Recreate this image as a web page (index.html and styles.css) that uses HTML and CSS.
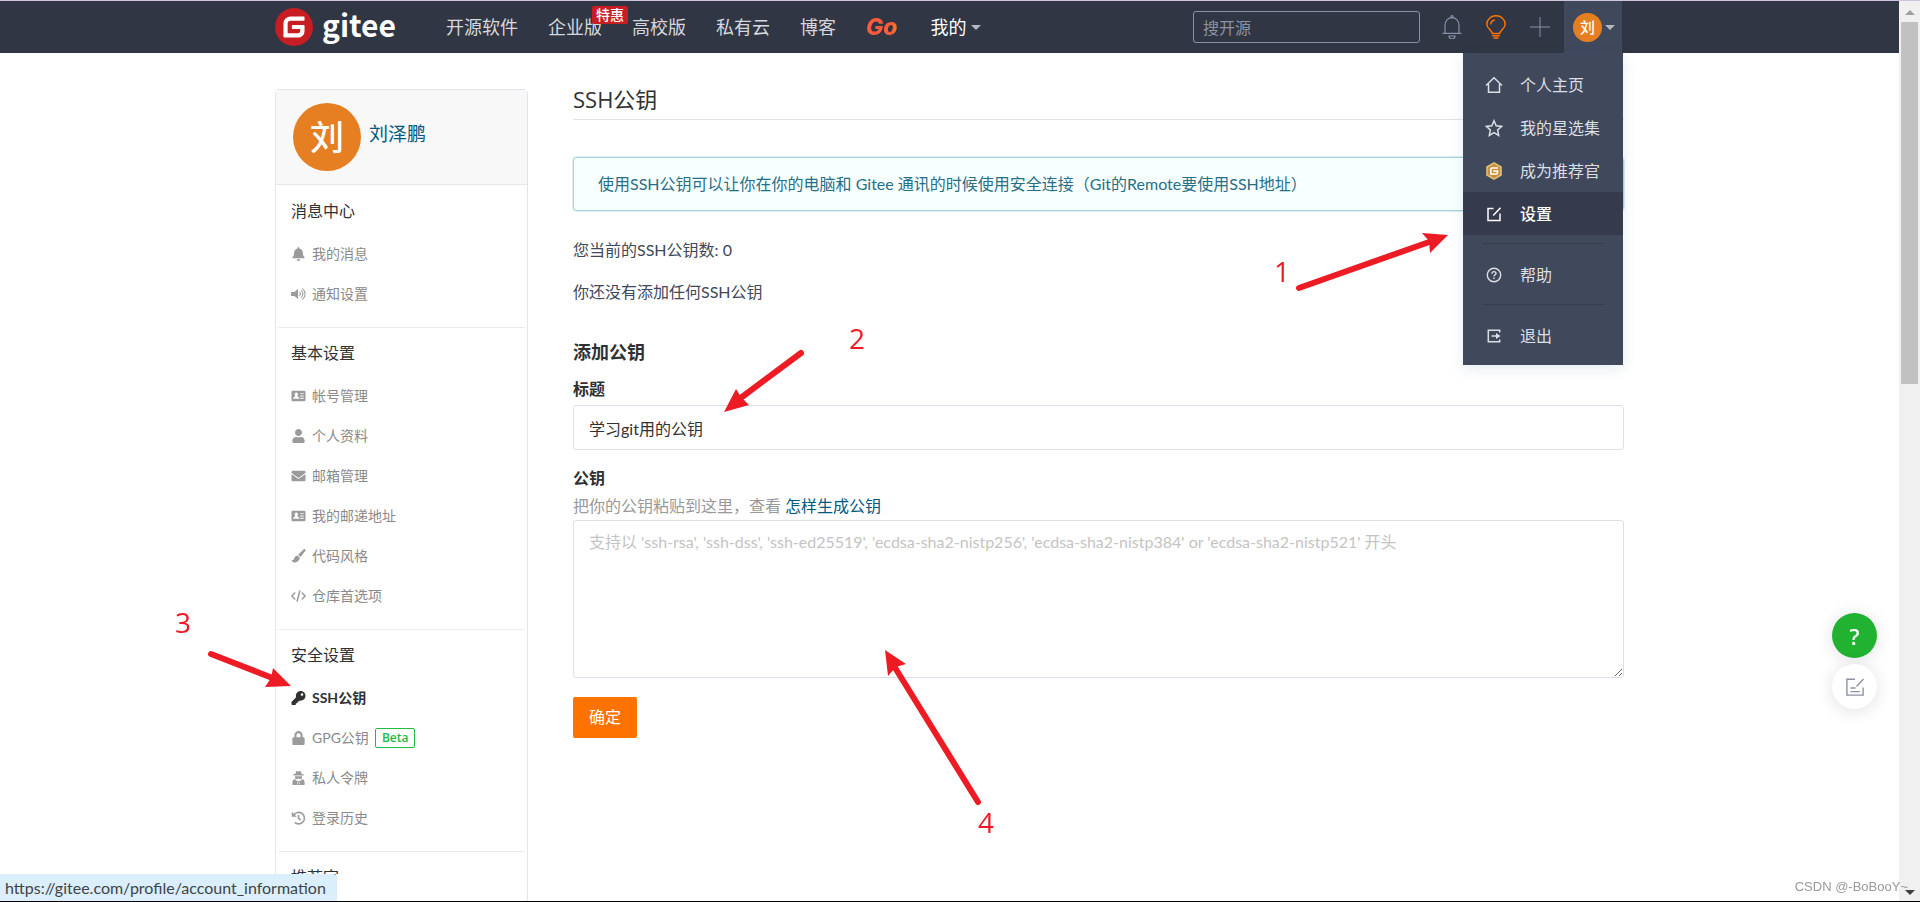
FILE: index.html
```html
<!DOCTYPE html>
<html lang="zh-CN">
<head>
<meta charset="utf-8">
<title>SSH公钥 - Gitee</title>
<link rel="stylesheet" href="styles.css">
</head>
<body>
<svg class="sprite" aria-hidden="true">
  <symbol id="gitee" viewBox="0 0 32 32"><circle cx="16" cy="16" r="16" fill="#c71d23"/><path fill="#fff" d="M24.1 14.222h-9.087a.79.79 0 0 0-.79.79v1.975c0 .437.353.79.79.79h5.531c.436 0 .79.354.79.79v.395a2.37 2.37 0 0 1-2.37 2.371h-7.507a.79.79 0 0 1-.79-.79v-7.506a2.37 2.37 0 0 1 2.37-2.37h11.06a.79.79 0 0 0 .79-.791V7.9a.79.79 0 0 0-.79-.79h-11.060a5.926 5.926 0 0 0-5.926 5.926v11.06c0 .437.354.79.79.79h11.653a5.333 5.333 0 0 0 5.333-5.333v-4.54a.79.79 0 0 0-.79-.79z"/></symbol>
  <symbol id="bell" viewBox="0 0 448 512"><path d="M224 512c35.32 0 63.97-28.65 63.97-64H160.03c0 35.35 28.65 64 63.97 64zm215.39-149.71c-19.32-20.76-55.47-51.99-55.47-154.29 0-77.7-54.48-139.9-127.94-155.16V32c0-17.67-14.32-32-31.98-32s-31.98 14.33-31.98 32v20.84C118.56 68.1 64.08 130.3 64.08 208c0 102.3-36.15 133.53-55.47 154.29-6 6.45-8.66 14.16-8.61 21.71.11 16.4 12.98 32 32.1 32h383.8c19.12 0 32-15.6 32.1-32 .05-7.55-2.61-15.27-8.61-21.71z"/></symbol>
  <symbol id="volume" viewBox="0 0 18 16"><path d="M1 5.500h3L8.500 2v12L4 10.500H1a1 1 0 0 1-1-1v-3a1 1 0 0 1 1-1z"/><path fill="none" stroke="currentColor" stroke-width="1.300" stroke-linecap="round" d="M10.500 6.300a2.200 2.200 0 0 1 0 3.400M12.300 4a5 5 0 0 1 0 8M14 1.800a8 8 0 0 1 0 12.400"/></symbol>
  <symbol id="card" viewBox="0 0 16 16"><path fill-rule="evenodd" d="M1.500 2h13A1.500 1.500 0 0 1 16 3.500v9a1.500 1.500 0 0 1-1.500 1.500h-13A1.500 1.500 0 0 1 0 12.500v-9A1.500 1.500 0 0 1 1.500 2zM5.500 4a2 2 0 0 0-1.500 3.300V8.500L2 10v1h7v-1L7 8.500V7.300A2 2 0 0 0 5.500 4zM10 4.500v1h4v-1zm0 3v1h4v-1zm0 2.500v1h4v-1z"/></symbol>
  <symbol id="user" viewBox="0 0 448 512"><path d="M224 256c70.7 0 128-57.3 128-128S294.7 0 224 0 96 57.3 96 128s57.3 128 128 128zm89.600 32h-16.700c-22.200 10.200-46.900 16-72.900 16s-50.600-5.800-72.900-16h-16.700C60.200 288 0 348.200 0 422.400V464c0 26.500 21.500 48 48 48h352c26.500 0 48-21.500 48-48v-41.600c0-74.200-60.200-134.400-134.400-134.400z"/></symbol>
  <symbol id="mail" viewBox="0 0 512 512"><path d="M502.300 190.800c3.900-3.100 9.700-.2 9.700 4.700V400c0 26.500-21.500 48-48 48H48c-26.500 0-48-21.500-48-48V195.600c0-5 5.700-7.800 9.700-4.700 22.400 17.400 52.100 39.500 154.100 113.600 21.100 15.400 56.700 47.800 92.200 47.600 35.700.3 72-32.800 92.300-47.600 102-74.100 131.600-96.300 154-113.700zM256 320c23.200.4 56.600-29.200 73.400-41.400 132.700-96.300 142.800-104.700 173.400-128.700 5.800-4.500 9.200-11.500 9.200-18.900v-19c0-26.500-21.500-48-48-48H48c-26.500 0-48 21.500-48 48v19c0 7.400 3.400 14.300 9.200 18.900 30.600 23.900 40.700 32.400 173.400 128.700 16.800 12.200 50.200 41.800 73.400 41.400z"/></symbol>
  <symbol id="brush" viewBox="0 0 16 16"><path d="M15.600.4c.5.500.6 1.200.1 1.900L10.300 9.200 7.600 6.600 13.700.5c.6-.6 1.400-.6 1.900-.1zM6.800 7.400l2.700 2.600c0 1-.3 1.700-.7 2.300-1 1.500-2.600 2.900-5 3.200C2 15.700.8 14.500 0 12.200c1.500.8 2.600.2 3-1.400.5-1.900 2-3.200 3.800-3.400z"/></symbol>
  <symbol id="code" viewBox="0 0 20 16"><path fill="none" stroke="currentColor" stroke-width="2" stroke-linecap="round" stroke-linejoin="round" d="M5 4 1.200 8 5 12M15 4l3.800 4-3.800 4M11.800 1.300 8.200 14.700"/></symbol>
  <symbol id="key" viewBox="0 0 512 512"><path d="M512 176.001C512 273.203 433.202 352 336 352c-11.220 0-22.190-1.062-32.827-3.069l-24.012 27.014A23.999 23.999 0 0 1 261.223 384H224v40c0 13.255-10.745 24-24 24h-40v40c0 13.255-10.745 24-24 24H24c-13.255 0-24-10.745-24-24v-78.059c0-6.365 2.529-12.470 7.029-16.971l161.802-161.802C163.108 213.814 160 195.271 160 176 160 78.798 238.797.001 335.999 0 433.488-.001 512 78.511 512 176.001zM336 128c0 26.510 21.490 48 48 48s48-21.490 48-48-21.490-48-48-48-48 21.490-48 48z"/></symbol>
  <symbol id="lock" viewBox="0 0 448 512"><path d="M400 224h-24v-72C376 68.200 307.800 0 224 0S72 68.200 72 152v72H48c-26.500 0-48 21.500-48 48v192c0 26.500 21.500 48 48 48h352c26.500 0 48-21.500 48-48V272c0-26.500-21.500-48-48-48zm-104 0H152v-72c0-39.700 32.300-72 72-72s72 32.300 72 72v72z"/></symbol>
  <symbol id="spy" viewBox="0 0 16 16"><path fill-rule="evenodd" d="M5.500 0 8 .7 10.500 0l1 3L14 4v1H2V4l2.500-1zM4 6h8v1.500L11.500 9H9L8 8 7 9H4.500L4 7.500zM3 9.500l2 .5 3 5.500L11 10l2-.5c1 .8 2 2 2 3.500v2c0 .6-.4 1-1 1H2c-.6 0-1-.4-1-1v-2c0-1.500 1-2.700 2-3.500zM5.800 11l1 4h2.400l1-4H9l-.4 1H7.400L7 11z"/></symbol>
  <symbol id="history" viewBox="0 0 16 16"><path fill="none" stroke="currentColor" stroke-width="1.800" d="M2.600 4.600A6.600 6.600 0 1 1 3.700 13M8 4.500V8.500L10.600 10.300"/><path d="M.3.800v5.700H6z"/></symbol>
  <symbol id="o-bell" viewBox="0 0 20 24"><g fill="none" stroke="currentColor" stroke-width="1.200"><path d="M.500 18.400h19M3 18.400V10.500C3 6 6 2.700 10 2.700s7 3.300 7 7.800v7.900"/><circle cx="10" cy="1.700" r="1.100"/><path d="M7 21h6a3 3 0 0 1-6 0z"/></g></symbol>
  <symbol id="o-bulb" viewBox="0 0 20 24"><g fill="none" stroke="currentColor" stroke-width="1.500"><path d="M6.300 18.500c0-3-5.500-5-5.500-9.300a9.200 8.500 0 0 1 18.400 0c0 4.300-5.500 6.300-5.500 9.300zM6.300 20.700h7.400M7.500 23h5M4.600 9.500A5 5 0 0 1 8.800 5"/></g></symbol>
  <symbol id="o-plus" viewBox="0 0 20 20"><path fill="none" stroke="currentColor" d="M0 10h20M10 0v20"/></symbol>
  <symbol id="o-home" viewBox="0 0 18 18"><path fill="none" stroke="currentColor" stroke-width="1.500" d="M1 9.500 9 1.800l8 7.700M3.500 8v8.200h11V8"/></symbol>
  <symbol id="o-star" viewBox="0 0 18 18"><path fill="none" stroke="currentColor" stroke-width="1.500" d="m9 1.800 2.200 5 5.400.6-4 3.600 1.100 5.400L9 13.700l-4.700 2.700L5.400 11l-4-3.600 5.400-.6z"/></symbol>
  <symbol id="o-edit" viewBox="0 0 18 18"><path fill="none" stroke="currentColor" stroke-width="1.500" d="M8.500 3.500H3v12h12V8.500M8.200 10.400 15.500 2.700"/></symbol>
  <symbol id="o-help" viewBox="0 0 18 18"><g fill="none" stroke="currentColor" stroke-width="1.400"><circle cx="9" cy="9" r="6.700"/><path d="M7 7.700C7 6.300 7.800 5.600 9 5.600s2 .8 2 1.800c0 1.300-2 1.400-2 3M9 11.600v1.300"/></g></symbol>
  <symbol id="o-exit" viewBox="0 0 18 18"><path fill="none" stroke="currentColor" stroke-width="1.500" d="M14.700 5.500V3.300H3.300v11.400h11.400v-2.200"/><path d="M6.500 8.200H11V6l4.500 3-4.500 3V9.800H6.500z"/></symbol>
  <symbol id="o-medal" viewBox="0 0 18 18"><path fill="#e0c07a" d="m9 0 7.800 4.500v9L9 18l-7.800-4.500v-9z"/><path fill="#c98f3c" d="m9 1.800 6.200 3.600v7.200L9 16.200l-6.200-3.600V5.400z"/><path fill="none" stroke="#fff" stroke-width="1.700" d="M13 6H7.200a1.400 1.400 0 0 0-1.400 1.400V12h5.400a1.300 1.300 0 0 0 1.300-1.300V9H8.200"/></symbol>
  <symbol id="o-note" viewBox="0 0 18 18"><path fill="none" stroke="currentColor" stroke-width="1.400" d="M9 1.200H.9v15.900h16.200V9.500M10.500 8.500 17.500 1M4.500 10h5M4.500 13.600h9.300"/></symbol>
</svg>

<div class="window">
  <div class="page">
    <header class="topbar">
      <div class="container topbar-row">
        <a class="brand" href="#"><svg class="brand-mark"><use href="#gitee"/></svg><span>gitee</span></a>
        <nav class="nav">
          <a href="#">开源软件</a>
          <a href="#" class="has-badge">企业版<span class="promo">特惠</span></a>
          <a href="#">高校版</a>
          <a href="#">私有云</a>
          <a href="#">博客</a>
          <a href="#" class="go">Go</a>
          <a href="#" class="mine">我的<i class="caret"></i></a>
        </nav>
        <div class="tools">
          <input class="search" type="text" placeholder="搜开源" aria-label="搜开源">
          <button class="tool" aria-label="通知"><svg class="tool-icon"><use href="#o-bell"/></svg></button>
          <button class="tool tool-hot" aria-label="灵感"><svg class="tool-icon"><use href="#o-bulb"/></svg></button>
          <button class="tool" aria-label="新建"><svg class="tool-icon"><use href="#o-plus"/></svg></button>
        </div>
        <div class="account">
          <button class="account-btn" aria-label="账户菜单"><span class="avatar avatar-s">刘</span><i class="caret"></i></button>
          <div class="menu">
            <a href="#"><svg><use href="#o-home"/></svg>个人主页</a>
            <a href="#"><svg><use href="#o-star"/></svg>我的星选集</a>
            <a href="#"><svg><use href="#o-medal"/></svg>成为推荐官</a>
            <a href="#" class="current"><svg><use href="#o-edit"/></svg>设置</a>
            <hr>
            <a href="#"><svg><use href="#o-help"/></svg>帮助</a>
            <hr>
            <a href="#"><svg><use href="#o-exit"/></svg>退出</a>
          </div>
        </div>
      </div>
    </header>

    <div class="container content">
      <aside class="sidebar">
        <div class="profile"><span class="avatar avatar-l">刘</span><a href="#">刘泽鹏</a></div>
        <section class="group">
          <h2>消息中心</h2>
          <ul>
            <li><a href="#"><svg><use href="#bell"/></svg>我的消息</a></li>
            <li><a href="#"><svg><use href="#volume"/></svg>通知设置</a></li>
          </ul>
        </section>
        <section class="group">
          <h2>基本设置</h2>
          <ul>
            <li><a href="#"><svg><use href="#card"/></svg>帐号管理</a></li>
            <li><a href="#"><svg><use href="#user"/></svg>个人资料</a></li>
            <li><a href="#"><svg><use href="#mail"/></svg>邮箱管理</a></li>
            <li><a href="#"><svg><use href="#card"/></svg>我的邮递地址</a></li>
            <li><a href="#"><svg><use href="#brush"/></svg>代码风格</a></li>
            <li><a href="#"><svg><use href="#code"/></svg>仓库首选项</a></li>
          </ul>
        </section>
        <section class="group">
          <h2>安全设置</h2>
          <ul>
            <li><a href="#" class="active"><svg><use href="#key"/></svg>SSH公钥</a></li>
            <li><a href="#"><svg><use href="#lock"/></svg>GPG公钥<span class="beta">Beta</span></a></li>
            <li><a href="#"><svg><use href="#spy"/></svg>私人令牌</a></li>
            <li><a href="#"><svg><use href="#history"/></svg>登录历史</a></li>
          </ul>
        </section>
        <section class="group">
          <h2>推荐官</h2>
        </section>
      </aside>

      <main class="main">
        <h1>SSH公钥</h1>
        <p class="notice">使用SSH公钥可以让你在你的电脑和 Gitee 通讯的时候使用安全连接（Git的Remote要使用SSH地址）</p>
        <p class="line">您当前的SSH公钥数: 0</p>
        <p class="line">你还没有添加任何SSH公钥</p>
        <form class="form">
          <h3>添加公钥</h3>
          <label for="title">标题</label>
          <input id="title" class="field" type="text" value="学习git用的公钥">
          <label for="key-text" class="second">公钥</label>
          <p class="hint">把你的公钥粘贴到这里，查看 <a href="#">怎样生成公钥</a></p>
          <textarea id="key-text" class="field area" placeholder="支持以 'ssh-rsa', 'ssh-dss', 'ssh-ed25519', 'ecdsa-sha2-nistp256', 'ecdsa-sha2-nistp384' or 'ecdsa-sha2-nistp521' 开头"></textarea>
          <button class="submit" type="button">确定</button>
        </form>
      </main>
    </div>
  </div>
  <div class="scrollbar"><i class="arrow-up"></i><div class="thumb"></div><i class="arrow-down"></i></div>
</div>

<div class="floaters">
  <button class="fab fab-help" aria-label="帮助">?</button>
  <button class="fab" aria-label="反馈"><svg><use href="#o-note"/></svg></button>
</div>

<svg class="marks" viewBox="0 0 1920 902">
  <g class="shafts">
    <path d="M1299 288 1432 241"/><path d="M801 353 738 400"/><path d="M211 654 275 679"/><path d="M978 802 894 666"/>
  </g>
  <path d="M1448 235 1422 233 1429 241 1430 253z"/>
  <path d="M724 412 736 389 741 397 749 405z"/>
  <path d="M291 686 273 668 271 678 265 687z"/>
  <path d="M885 650 906 664 896 667 888 676z"/>
  <text x="1274" y="282">1</text>
  <text x="849" y="349">2</text>
  <text x="175" y="633">3</text>
  <text x="978" y="833">4</text>
</svg>

<div class="status">https://gitee.com/profile/account_information</div>
<div class="watermark">CSDN @-BoBooY~</div>
</body>
</html>
```

FILE: styles.css
```css
* { box-sizing: border-box; }

body {
  margin: 0;
  height: 100vh;
  overflow: hidden;
  background: #fff;
  border-top: 1px solid #cfc4e0;
  border-bottom: 1px solid #000;
  font-family: Lato, "Noto Sans CJK SC", sans-serif;
  font-size: 16px;
  line-height: 24px;
  color: #40485b;
}

h1, h2, h3, p, ul { margin: 0; padding: 0; font-weight: 400; }
ul { list-style: none; }
a { color: inherit; text-decoration: none; }
button, input, textarea { font: inherit; color: inherit; }
button { border: 0; padding: 0; background: none; }
svg { fill: currentColor; }
.sprite { position: absolute; width: 0; height: 0; }

.window { display: grid; grid-template-columns: minmax(0, 1fr) 21px; height: 100%; }
.page { overflow: hidden; }
.container { width: 100%; max-width: 1349px; margin: 0 auto; }

/* top bar */
.topbar { background: #303643; color: #d5d8de; }
.topbar-row { display: flex; align-items: center; height: 52px; padding-right: 2px; }
.brand { display: flex; align-items: center; gap: 9px; width: 171px; color: #fff; font-family: "Noto Sans CJK SC", sans-serif; font-size: 30px; line-height: 44px; font-weight: 700; }
.brand span { padding-bottom: 6px; }
.brand-mark { width: 38px; height: 38px; }
.nav { display: flex; align-items: center; gap: 30px; font-size: 18px; }
.has-badge { position: relative; }
.promo {
  position: absolute; left: 44px; top: -9px;
  padding: 0 4px; border-radius: 2px;
  background: #c71d23; color: #fff;
  font-size: 14px; line-height: 18px; font-weight: 500; white-space: nowrap;
}
.go {
  padding-right: 3px;
  font: italic 800 23px/24px Inter, sans-serif;
  background: linear-gradient(90deg, #fe5a3c 70%, #ff8a00);
  -webkit-background-clip: text; background-clip: text; color: transparent;
}
.mine { display: flex; align-items: center; gap: 4px; color: #fff; }
.caret { border: 5px solid transparent; border-top-color: #b5b8c0; border-bottom-width: 0; }
.tools { display: flex; align-items: center; margin-left: auto; padding-right: 2px; }
.search {
  width: 227px; height: 32px; margin-right: 10px; padding: 0 9px;
  border: 1px solid #8c92a4; border-radius: 3px; background: transparent;
}
.search::placeholder { color: #8c92a4; opacity: 1; }
.tool { display: grid; place-items: center; width: 44px; height: 52px; color: #8690a8; }
.tool-hot { color: #fe7300; }
.tool-icon { width: 20px; height: 24px; }
.account { position: relative; align-self: stretch; }
.account-btn { display: flex; align-items: center; gap: 3px; width: 58px; height: 100%; padding-left: 9px; background: #40485b; }
.avatar { display: grid; place-items: center; flex: none; border-radius: 50%; background: #e67e22; color: #fff; }
.avatar-s { width: 29px; height: 29px; font-size: 15px; font-weight: 500; }
.avatar-l { width: 68px; height: 68px; font-size: 34px; font-weight: 500; }

.menu {
  position: absolute; z-index: 2; top: 100%; right: -1px; width: 160px;
  padding: 10px 0 8px; background: #40485b; color: #dcdfe5;
  box-shadow: 0 4px 14px rgba(39, 111, 134, 0.12);
}
.menu a { display: flex; align-items: center; gap: 17px; height: 43px; padding-left: 22px; }
.menu svg { width: 18px; height: 18px; }
.menu .current { background: #353a4d; color: #fff; font-weight: 500; }
.menu hr { height: 1px; margin: 8px 20px 9px; border: 0; background: #363e4b; }

/* layout */
.content { display: grid; grid-template-columns: 253px minmax(0, 1fr); gap: 45px; align-items: start; padding-top: 36px; }

.sidebar { border: 1px solid #e3e5e9; border-radius: 4px; }
.profile { display: flex; align-items: center; gap: 8px; height: 95px; padding: 13px 17px 14px; background: #f8f8f8; border-bottom: 1px solid #e3e9ed; }
.profile a { padding-bottom: 5px; font-size: 19px; color: #005980; }
.group { padding: 13px 15px 13px; }
.group + .group { border-top: 1px solid #ececec; margin: 0 2px; padding-left: 13px; padding-right: 13px; }
.profile + .group { padding-top: 14px; }
.group h2 { font-size: 16px; line-height: 24px; color: #303133; }
.group ul { margin-top: 11px; }
.group a { display: flex; align-items: center; gap: 6px; height: 40px; font-size: 14px; color: #8a8a8a; }
.group svg { width: 15px; height: 14px; color: #9b9b9b; }
.group .active { font-weight: 700; color: #303133; }
.group .active svg { color: #303133; }
.beta { padding: 0 6px; border: 1px solid #21ba45; border-radius: 2px; font-family: "Open Sans", sans-serif; font-size: 12px; line-height: 18px; font-weight: 600; color: #21ba45; }

.main h1 { padding-bottom: 10px; border-bottom: 1px solid #e3e3e5; font-family: "Open Sans", "Noto Sans CJK SC", sans-serif; font-size: 22px; line-height: 20px; color: #303133; }
.notice { margin: 37px 0 27px; padding: 14px 24px; border: 1px solid #a9d5de; border-radius: 4px; background: #f8ffff; color: #276f86; box-shadow: 0 0 0 1px rgba(169, 213, 222, 0.4); }
.line { margin-bottom: 18px; }
.form { display: flex; flex-direction: column; align-items: flex-start; padding-top: 18px; color: #303133; }
.form h3 { font-size: 18px; font-weight: 700; margin-bottom: 13px; }
.form label { font-weight: 600; margin-bottom: 4px; }
.form .second { margin: 16px 0 4px; }
.field { display: block; width: 100%; height: 45px; padding: 0 15px; border: 1px solid #dcdfe6; border-radius: 3px; background: #fff; }
.field::placeholder { color: #c4c4c4; opacity: 1; }
.area { height: 158px; padding-top: 9px; resize: vertical; }
.hint { margin-bottom: 2px; color: #999; }
.hint a { color: #005980; }
.submit { margin-top: 19px; padding: 8px 16px 9px; border-radius: 2px; background: #fe7300; color: #fff; }

/* window chrome */
.scrollbar { display: flex; flex-direction: column; align-items: center; background: #f0f0f0; }
.thumb { width: 17px; height: 362px; margin-top: 7px; background: #c1c1c1; }
.arrow-up { margin-top: 9px; border: 5px solid transparent; border-top-width: 0; border-bottom-color: #a0a0a0; }
.arrow-down { margin: auto 0 6px; border: 5px solid transparent; border-bottom-width: 0; border-top-color: #404040; }

.floaters { position: fixed; right: 43px; bottom: 193px; display: grid; gap: 6px; }
.fab { display: grid; place-items: center; width: 45px; height: 45px; border-radius: 50%; background: #fff; color: #8c92a4; box-shadow: 0 2px 18px rgba(0, 0, 0, 0.12); }
.fab-help { background: #22b232; color: #fff; font-family: "Open Sans", sans-serif; font-size: 22px; font-weight: 600; }
.fab svg { width: 18px; height: 18px; }

.marks { position: absolute; left: 0; top: 0; width: 100%; z-index: 3; pointer-events: none; fill: #ed1c24; font-family: "Open Sans", sans-serif; font-size: 28px; }
.shafts { fill: none; stroke: #ed1c24; stroke-width: 6px; stroke-linecap: round; }

.status { position: fixed; left: 0; bottom: 1px; padding: 2px 11px 1px 5px; border-radius: 0 4px 0 0; background: #dbeefb; color: #404448; font-size: 16px; line-height: 24px; }
.watermark { position: fixed; right: 12px; bottom: 3px; font: 13px/24px "Liberation Sans", sans-serif; color: #999; }
```
